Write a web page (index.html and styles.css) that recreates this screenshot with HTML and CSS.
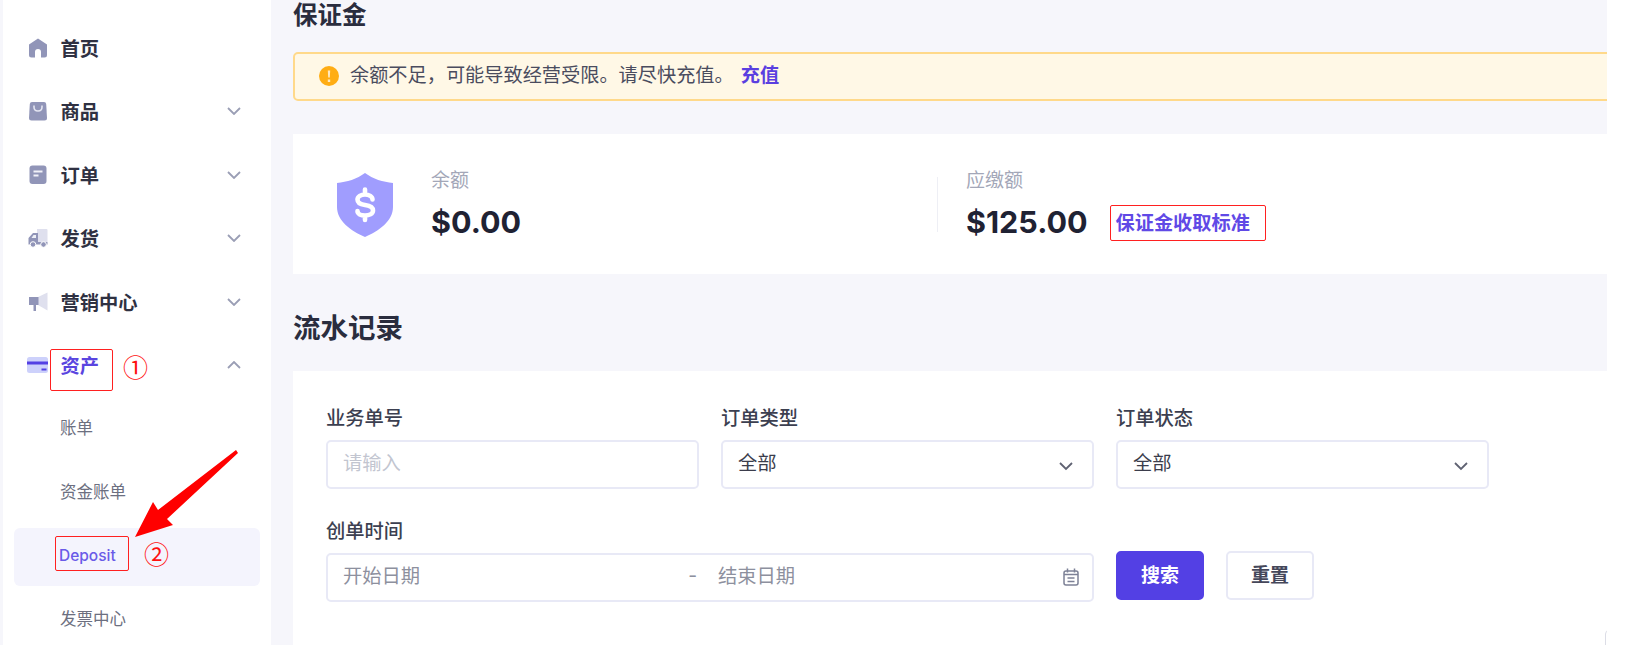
FILE: index.html
```html
<!DOCTYPE html>
<html lang="zh">
<head>
<meta charset="utf-8">
<title>保证金</title>
<link rel="stylesheet" href="styles.css">
</head>
<body>
<div class="app">
  <nav class="sidebar">
    <a class="nav-row"><svg class="nav-icon" viewBox="0 0 20 20"><path fill="#9195b8" d="M10 .5 19 6.500V17q0 2.500-2.500 2.500H13V14q0-3-3-3t-3 3v5.500H3.500Q1 19.500 1 17V6.500Z"/></svg><span class="nav-text">首页</span></a>
    <a class="nav-row"><svg class="nav-icon" viewBox="0 0 20 20"><path fill="#9195b8" d="M4 1h12q2 0 2.200 2L19 17q0 2.500-2.500 2.500h-13Q1 19.500 1 17L1.800 3Q2 1 4 1Z"/><path fill="none" stroke="#e4e5f1" stroke-width="1.600" d="M6 4.500v1.500q0 4 4 4t4-4V4.500"/></svg><span class="nav-text">商品</span><svg class="chev" viewBox="0 0 14 8"><path d="M1 1l6 6 6-6"/></svg></a>
    <a class="nav-row"><svg class="nav-icon" viewBox="0 0 20 20"><rect x="1.500" y=".5" width="17" height="18.500" rx="3" fill="#9195b8"/><path stroke="#f1f1f8" stroke-width="1.800" d="M5.500 6.500h9M5.500 10.500h5"/></svg><span class="nav-text">订单</span><svg class="chev" viewBox="0 0 14 8"><path d="M1 1l6 6 6-6"/></svg></a>
    <a class="nav-row"><svg class="nav-icon" viewBox="0 0 20 20"><path fill="#dfe0ee" d="M9 1h9.500q1 0 1 1v12H9z"/><path fill="#9195b8" d="M5 5h5v9h9.500v2.500H.5V10Z"/><path fill="#eef0f7" d="M5.500 7H8v3H3.500Z"/><circle cx="5" cy="16.500" r="2.800" fill="#9195b8" stroke="#fff"/><circle cx="15.500" cy="16.500" r="2.800" fill="#9195b8" stroke="#fff"/></svg><span class="nav-text">发货</span><svg class="chev" viewBox="0 0 14 8"><path d="M1 1l6 6 6-6"/></svg></a>
    <a class="nav-row"><svg class="nav-icon" viewBox="0 0 20 20"><path fill="#dfe0ee" d="M10 5 19.500 .5v18L10 13z"/><path fill="#9195b8" d="M1 5h9.500v8H8v6H5.500V13H1z"/></svg><span class="nav-text">营销中心</span><svg class="chev" viewBox="0 0 14 8"><path d="M1 1l6 6 6-6"/></svg></a>
    <a class="nav-row is-open"><svg class="nav-icon nav-icon-wide" viewBox="0 0 21 16"><rect width="21" height="16" rx="2.500" fill="#cdd1fb"/><path fill="#5340e4" d="M0 4.500h21v3H0zM14.500 11.500h5v2h-5z"/></svg><span class="nav-text">资产</span><svg class="chev" viewBox="0 0 14 8"><path d="M1 7l6-6 6 6"/></svg></a>
    <a class="sub-row">账单</a>
    <a class="sub-row">资金账单</a>
    <a class="sub-row is-active">Deposit</a>
    <a class="sub-row">发票中心</a>
  </nav>

  <main class="main">
    <h1 class="title-small">保证金</h1>
    <div class="alert">
      <svg class="alert-icon" viewBox="0 0 20 20"><circle cx="10" cy="10" r="10" fill="#ffad14"/><path fill="#ffe9c0" d="M8.800 4.500h2.400l-.4 7H9.200zM8.800 13.500h2.400v2.400H8.800z"/></svg>
      <span>余额不足，可能导致经营受限。请尽快充值。</span>
      <a class="alert-link">充值</a>
    </div>

    <section class="balance-card">
      <svg class="shield" viewBox="0 0 56 64"><path fill="#a09dfe" d="M28 0C36 6 46 9 56 10V34C56 48 42 58 28 64 14 58 0 48 0 34V10C10 9 20 6 28 0Z"/><path fill="none" stroke="#fff" stroke-width="4.600" stroke-linecap="round" d="M35.500 26.500C35.500 23.500 32 21.500 28 21.500S20.500 23.500 20.500 26.500C20.500 30.500 24 31.500 28 32S36 33.500 36 37.500C36 41 32 42.500 28 42.500S20.500 41 20.500 38M28 16.500V20M28 44V47"/></svg>
      <div class="stat stat-first">
        <div class="stat-label">余额</div>
        <div class="stat-value">$0.00</div>
      </div>
      <div class="stat stat-second">
        <div class="stat-label">应缴额</div>
        <div class="stat-line">
          <span class="stat-value">$125.00</span>
          <a class="standard-link">保证金收取标准</a>
        </div>
      </div>
    </section>

    <h2 class="title-large">流水记录</h2>

    <section class="filter-card">
      <form class="filter-grid">
        <div class="field">
          <label class="field-label">业务单号</label>
          <div class="control placeholder">请输入</div>
        </div>
        <div class="field">
          <label class="field-label">订单类型</label>
          <div class="control">全部<svg class="select-chev" viewBox="0 0 14 9"><path d="M1 1l6 6 6-6"/></svg></div>
        </div>
        <div class="field">
          <label class="field-label">订单状态</label>
          <div class="control">全部<svg class="select-chev" viewBox="0 0 14 9"><path d="M1 1l6 6 6-6"/></svg></div>
        </div>
        <div class="field field-wide">
          <label class="field-label">创单时间</label>
          <div class="control date-control">
            <span class="date-part">开始日期</span>
            <span class="date-sep">-</span>
            <span class="date-part">结束日期</span>
            <svg class="cal" viewBox="0 0 16 18"><g fill="none" stroke="#7d8196" stroke-width="1.500"><rect x="1" y="3" width="14" height="14" rx="2"/><path d="M4.500 .5v4M11.500 .5v4M1 6.500h14M4.500 10h7M4.500 13.500h7"/></g></svg>
          </div>
        </div>
        <div class="actions">
          <button class="btn btn-primary" type="button">搜索</button>
          <button class="btn" type="button">重置</button>
        </div>
      </form>
      <div class="next-corner"></div>
    </section>
  </main>
</div>

<div class="mark mark-asset"></div>
<div class="mark mark-deposit"></div>
<div class="mark mark-standard"></div>
<span class="circled circled-one">①</span>
<span class="circled circled-two">②</span>
<svg class="arrow" viewBox="0 0 115 100"><polygon fill="#ff0000" points="106,5 108,8 37,74 43,80 5,92 23,57 28,65"/></svg>
</body>
</html>
```

FILE: styles.css
```css
* { box-sizing: border-box; }

html, body {
  margin: 0;
  height: 645px;
  overflow: hidden;
  background: #fff;
}

body {
  position: relative;
  font-family: Inter, "Noto Sans CJK SC", sans-serif;
  color: #2a2d3e;
}

.app {
  display: flex;
  width: 1607px;
  height: 645px;
  padding-top: 1px;
  background: #f6f6fb;
  overflow: hidden;
}

/* sidebar */
.sidebar {
  flex: none;
  width: 268px;
  margin: -1px 0 0 3px;
  padding-top: 16px;
  background: #fff;
}

.nav-row {
  display: flex;
  align-items: center;
  height: 63.500px;
  padding-left: 25px;
}

.nav-icon {
  flex: none;
  width: 20px;
  height: 20px;
  margin-right: 12.500px;
}

.nav-icon-wide {
  width: 21px;
  height: 16px;
  margin-left: -1px;
}

.nav-text {
  font-size: 19.300px;
  font-weight: 700;
  color: #2f3142;
}

.chev {
  flex: none;
  width: 14px;
  height: 8px;
  margin-left: auto;
  margin-right: 30px;
  fill: none;
  stroke: #9a9eb5;
  stroke-width: 1.800;
}

.is-open { margin-bottom: 2px; }
.is-open .nav-text { color: #5a45e0; }

.sub-row {
  display: flex;
  align-items: center;
  height: 58px;
  margin: 0 11px 5.600px;
  padding: 0 0 2px 46px;
  border-radius: 6px;
  font-size: 16.500px;
  color: #6c6f80;
}

.sub-row.is-active {
  margin-top: 7.100px;
  margin-bottom: 4.100px;
  padding-left: 45px;
  background: #f4f4fd;
  color: #6a5be8;
  font-size: 15.500px;
  font-weight: 500;
}

/* main column */
.main {
  flex: none;
  width: 1314px;
  margin-left: 22px;
  overflow: hidden;
}

.title-small {
  margin: -1px 0 0;
  height: 30px;
  font-size: 24.500px;
  line-height: 30px;
  font-weight: 700;
}

.alert {
  display: flex;
  align-items: center;
  width: 1330px;
  height: 49px;
  margin-top: 22px;
  padding: 0 0 2px 24px;
  border: 2px solid #ffd98a;
  border-radius: 5px;
  background: #fff8e6;
  font-size: 19.200px;
  color: #4a4c5e;
}

.alert > span,
.alert-link { padding-bottom: 4px; }

.alert-icon {
  width: 20px;
  height: 20px;
  margin-right: 11px;
}

.alert-link {
  margin-left: 7px;
  color: #5a3fe0;
  font-weight: 700;
}

.balance-card {
  display: flex;
  height: 140px;
  margin-top: 33px;
  background: #fff;
}

.shield {
  flex: none;
  width: 56px;
  height: 64px;
  margin: 39px 0 0 44px;
}

.stat { padding-top: 34px; }

.stat-first {
  width: 506px;
  margin-left: 38px;
}

.stat-second {
  position: relative;
  height: 55px;
  margin-top: 43px;
  padding: 0 0 0 28px;
  border-left: 1px solid #eeeff5;
}

.stat-label {
  height: 26px;
  font-size: 19px;
  line-height: 26px;
  color: #a3a7b8;
}

.stat-second .stat-label { margin-top: -9px; }

.stat-value {
  margin-top: 8px;
  font-size: 30.500px;
  line-height: 40px;
  font-weight: 700;
  color: #1f2233;
}

.stat-line {
  display: flex;
  align-items: center;
  margin-top: 8px;
}

.stat-line .stat-value { margin-top: 0; }

.standard-link {
  margin-left: 28px;
  font-size: 19.200px;
  font-weight: 700;
  color: #6049e6;
}

.title-large {
  height: 40px;
  margin: 34px 0 0;
  font-size: 27.500px;
  line-height: 40px;
  font-weight: 700;
}

.filter-card {
  position: relative;
  height: 300px;
  margin-top: 23px;
  padding: 33px 0 0 33px;
  background: #fff;
}

.filter-grid {
  display: grid;
  grid-template-columns: repeat(3, 372.500px);
  column-gap: 22.500px;
  row-gap: 28px;
}

.field-wide { grid-column: span 2; }

.field-label {
  display: block;
  height: 28px;
  margin-bottom: 8px;
  font-size: 19.300px;
  line-height: 29px;
  font-weight: 500;
  color: #3c3f50;
}

.control {
  display: flex;
  align-items: center;
  height: 49px;
  padding: 0 19px 5px 15px;
  border: 2px solid #e8e9f6;
  border-radius: 5px;
  background: #fff;
  font-size: 19.300px;
  color: #3b3d4c;
}

.placeholder { color: #c2c5d0; }

.select-chev {
  width: 14px;
  height: 9px;
  margin-left: auto;
  margin-top: 9px;
  fill: none;
  stroke: #5f6272;
  stroke-width: 1.800;
}

.date-part { color: #8d909e; }

.date-sep {
  margin: 0 21px 0 268px;
  color: #8d909e;
}

.cal {
  width: 16px;
  height: 18px;
  margin-left: auto;
  margin-right: -6px;
  margin-top: 4px;
}

.actions {
  display: flex;
  gap: 22px;
  margin-top: 34px;
}

.btn {
  width: 88px;
  height: 49px;
  padding: 0 0 4px;
  border: 2px solid #e8e9f6;
  border-radius: 5px;
  background: #fff;
  font-family: inherit;
  font-size: 19px;
  font-weight: 700;
  color: #45475a;
}

.btn-primary {
  border-color: #5340e4;
  background: #5340e4;
  color: #fff;
}

.next-corner {
  position: absolute;
  right: -6px;
  top: 259px;
  width: 8px;
  height: 40px;
  border: 1px solid #dcdde6;
  border-radius: 5px;
}

/* annotations */
.mark {
  position: absolute;
  border: 1px solid #ff2020;
  border-radius: 2px;
}

.mark-asset { left: 50px; top: 349px; width: 63px; height: 42px; }
.mark-deposit { left: 55px; top: 536px; width: 74px; height: 35px; }
.mark-standard { left: 1110px; top: 205px; width: 156px; height: 36px; }

.circled {
  position: absolute;
  font-family: "Noto Sans CJK SC", sans-serif;
  font-size: 25px;
  line-height: 30px;
  color: #ff1010;
}

.circled-one { left: 123px; top: 351px; }
.circled-two { left: 144px; top: 538px; }

.arrow {
  position: absolute;
  left: 130px;
  top: 445px;
  width: 115px;
  height: 100px;
}
```
